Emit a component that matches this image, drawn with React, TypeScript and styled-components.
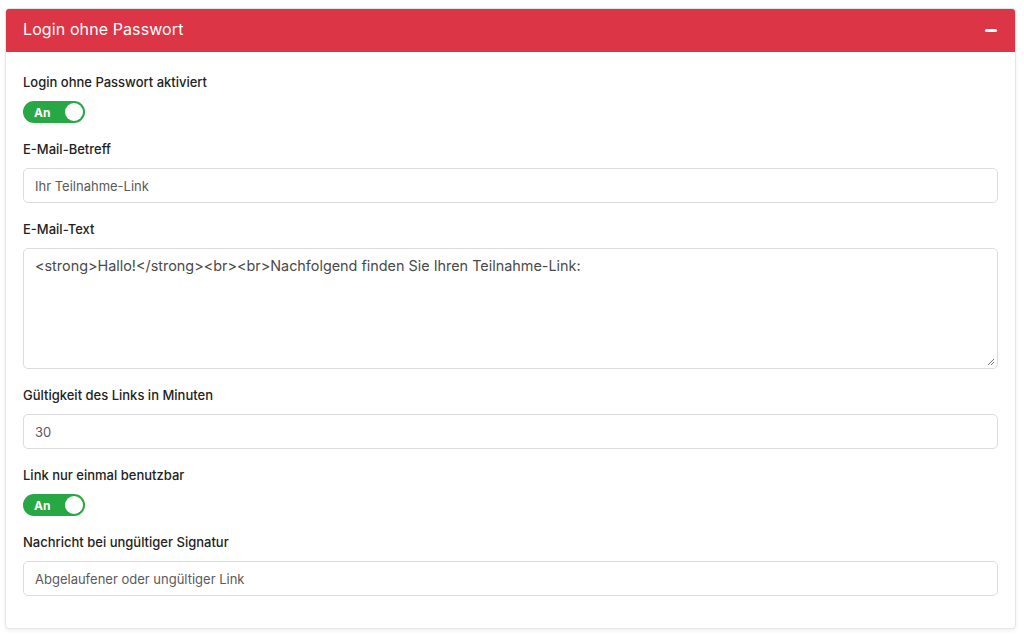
import React from "react";
import styled, { createGlobalStyle } from "styled-components";

const Global = createGlobalStyle`
  html, body { margin: 0; padding: 0; background: #ffffff; }
  body { font-family: Inter, "Noto Sans", Arial, sans-serif; }
  * { box-sizing: border-box; }
`;

const Page = styled.div`
  padding: 8px 8px 8px 5px;
`;

const Card = styled.section`
  width: 1011px;
  background: #fff;
  border: 1px solid #e6e6e6;
  border-radius: 4px;
  box-shadow: 0 2px 4px rgba(0, 0, 0, 0.06);
  overflow: hidden;
`;

const Header = styled.header`
  height: 44px;
  background: #dc3545;
  display: flex;
  align-items: center;
  justify-content: space-between;
  padding: 0 19px 3px 18px;
  margin: -1px -1px 0 -1px;
`;

const Title = styled.h2`
  margin: 0;
  color: #fff;
  font-size: 16px;
  font-weight: 400;
  letter-spacing: 0.1px;
`;

const Minus = styled.span`
  width: 12px;
  height: 3px;
  border-radius: 2px;
  background: #fff;
  margin-top: 3px;
`;

const Body = styled.div`
  padding: 20px 17px 16px 17px;
  display: flex;
  flex-direction: column;
`;

const Field = styled.div`
  display: flex;
  flex-direction: column;
  gap: 9px;
  margin-bottom: 16px;
`;

const Label = styled.label`
  font-size: 13px;
  line-height: 20px;
  font-weight: 500;
  color: #222;
`;

const Input = styled.div`
  height: 35px;
  border: 1px solid #dcdcdc;
  border-radius: 5px;
  padding: 0 11px;
  display: flex;
  align-items: center;
  font-size: 13px;
  color: #5a5a5a;
`;

const TextArea = styled.div`
  position: relative;
  height: 121px;
  border: 1px solid #dcdcdc;
  border-radius: 5px;
  padding: 6px 11px;
  font-size: 14.4px;
  line-height: 22px;
  color: #4a4a4a;
`;

const Grip = styled.svg`
  position: absolute;
  right: 2px;
  bottom: 2px;
`;

const Toggle = styled.div`
  width: 62px;
  height: 22px;
  border-radius: 11px;
  background: #28a745;
  display: flex;
  align-items: center;
  justify-content: space-between;
  padding: 0 2px 0 11px;
`;

const ToggleText = styled.span`
  color: #fff;
  font-size: 12px;
  font-weight: 700;
`;

const Knob = styled.span`
  width: 18px;
  height: 18px;
  border-radius: 50%;
  background: #fff;
`;

const Switch = () => (
  <Toggle>
    <ToggleText>An</ToggleText>
    <Knob />
  </Toggle>
);

export default function App() {
  return (
    <Page>
      <Global />
      <Card>
        <Header>
          <Title>Login ohne Passwort</Title>
          <Minus />
        </Header>
        <Body>
          <Field>
            <Label>Login ohne Passwort aktiviert</Label>
            <Switch />
          </Field>
          <Field>
            <Label>E-Mail-Betreff</Label>
            <Input>Ihr Teilnahme-Link</Input>
          </Field>
          <Field>
            <Label>E-Mail-Text</Label>
            <TextArea>
              {"<strong>Hallo!</strong><br><br>Nachfolgend finden Sie Ihren Teilnahme-Link:"}
              <Grip width="9" height="9" viewBox="0 0 9 9">
                <path d="M8 2 L2 8 M8 5 L5 8" stroke="#777" strokeWidth="1" fill="none" />
              </Grip>
            </TextArea>
          </Field>
          <Field>
            <Label>Gültigkeit des Links in Minuten</Label>
            <Input>30</Input>
          </Field>
          <Field>
            <Label>Link nur einmal benutzbar</Label>
            <Switch />
          </Field>
          <Field>
            <Label>Nachricht bei ungültiger Signatur</Label>
            <Input>Abgelaufener oder ungültiger Link</Input>
          </Field>
        </Body>
      </Card>
    </Page>
  );
}
